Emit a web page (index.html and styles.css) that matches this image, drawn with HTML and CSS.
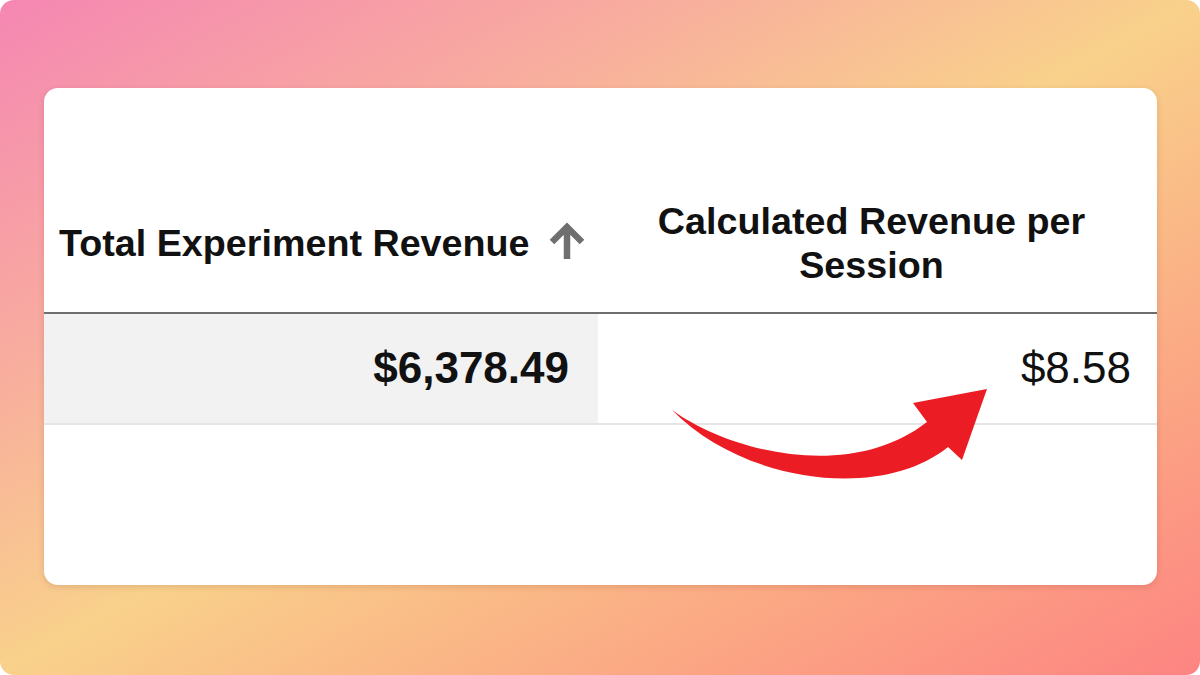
FILE: index.html
```html
<!DOCTYPE html>
<html lang="en">
<head>
<meta charset="utf-8">
<title>Revenue table</title>
<link rel="stylesheet" href="styles.css">
</head>
<body>
<div class="stage">
  <div class="card">
    <div class="table">
      <div class="th th-first">
        <span class="th-label">Total Experiment Revenue</span>
        <svg class="sort-icon" viewBox="0 0 38 40" width="38" height="40" aria-hidden="true">
          <path d="M19 37 V6 M4 20 L19 5 L34 20" fill="none" stroke="#6f6f6f" stroke-width="6.5" stroke-linejoin="miter"/>
        </svg>
      </div>
      <div class="th th-second">
        <span class="th-label center">Calculated Revenue per<br>Session</span>
      </div>
      <div class="td td-first">$6,378.49</div>
      <div class="td td-second">$8.58</div>
    </div>
    <svg class="pointer" viewBox="44 88 1113 497" width="1113" height="497" aria-hidden="true">
      <path d="M672 410 C 730 452 850 482 927 422 L 913 403 L 987 389 L 962 460 L 948 447 C 880 502 742 482 672 410 Z" fill="#ec1c24"/>
    </svg>
  </div>
</div>
</body>
</html>
```
FILE: styles.css
```css
* { box-sizing: border-box; }
html, body {
  margin: 0;
  padding: 0;
  background: #ffffff;
}
body {
  width: 1200px;
  height: 675px;
  overflow: hidden;
  font-family: "Liberation Sans", Arial, sans-serif;
  color: #111111;
}
.stage {
  width: 1200px;
  height: 675px;
  border-radius: 14px;
  background: linear-gradient(to bottom right, #f587b3 0%, #f8a9a0 25%, #f9d18b 50%, #fbaa84 75%, #fd8482 100%);
  padding: 88px 43px 0 44px;
}
.card {
  position: relative;
  width: 1113px;
  height: 497px;
  background: #ffffff;
  border-radius: 14px;
  box-shadow: 0 2px 6px rgba(120, 60, 40, 0.18);
  overflow: hidden;
}
.table {
  display: grid;
  grid-template-columns: 554px 1fr;
  grid-template-rows: 226px 111px;
}
.th {
  display: flex;
  align-items: center;
  padding-top: 86px;
  border-bottom: 2px solid #6e6e6e;
  font-weight: bold;
  font-size: 37.7px;
  line-height: 44px;
}
.th-first {
  padding-left: 15px;
  gap: 18px;
}
.th-second {
  justify-content: center;
  padding-right: 12px;
}
.th-label.center {
  text-align: center;
}
.sort-icon {
  display: block;
  flex: none;
  margin-top: -2px;
}
.td {
  display: flex;
  align-items: center;
  justify-content: flex-end;
  font-size: 44px;
  border-bottom: 2px solid #e5e5e5;
  padding-right: 28px;
  padding-bottom: 2px;
}
.td-first {
  background: #f2f2f2;
  font-weight: bold;
  padding-right: 29px;
}
.td-second {
  font-weight: normal;
  padding-right: 26px;
}
.pointer {
  position: absolute;
  left: 0;
  top: 0;
  pointer-events: none;
}
```
